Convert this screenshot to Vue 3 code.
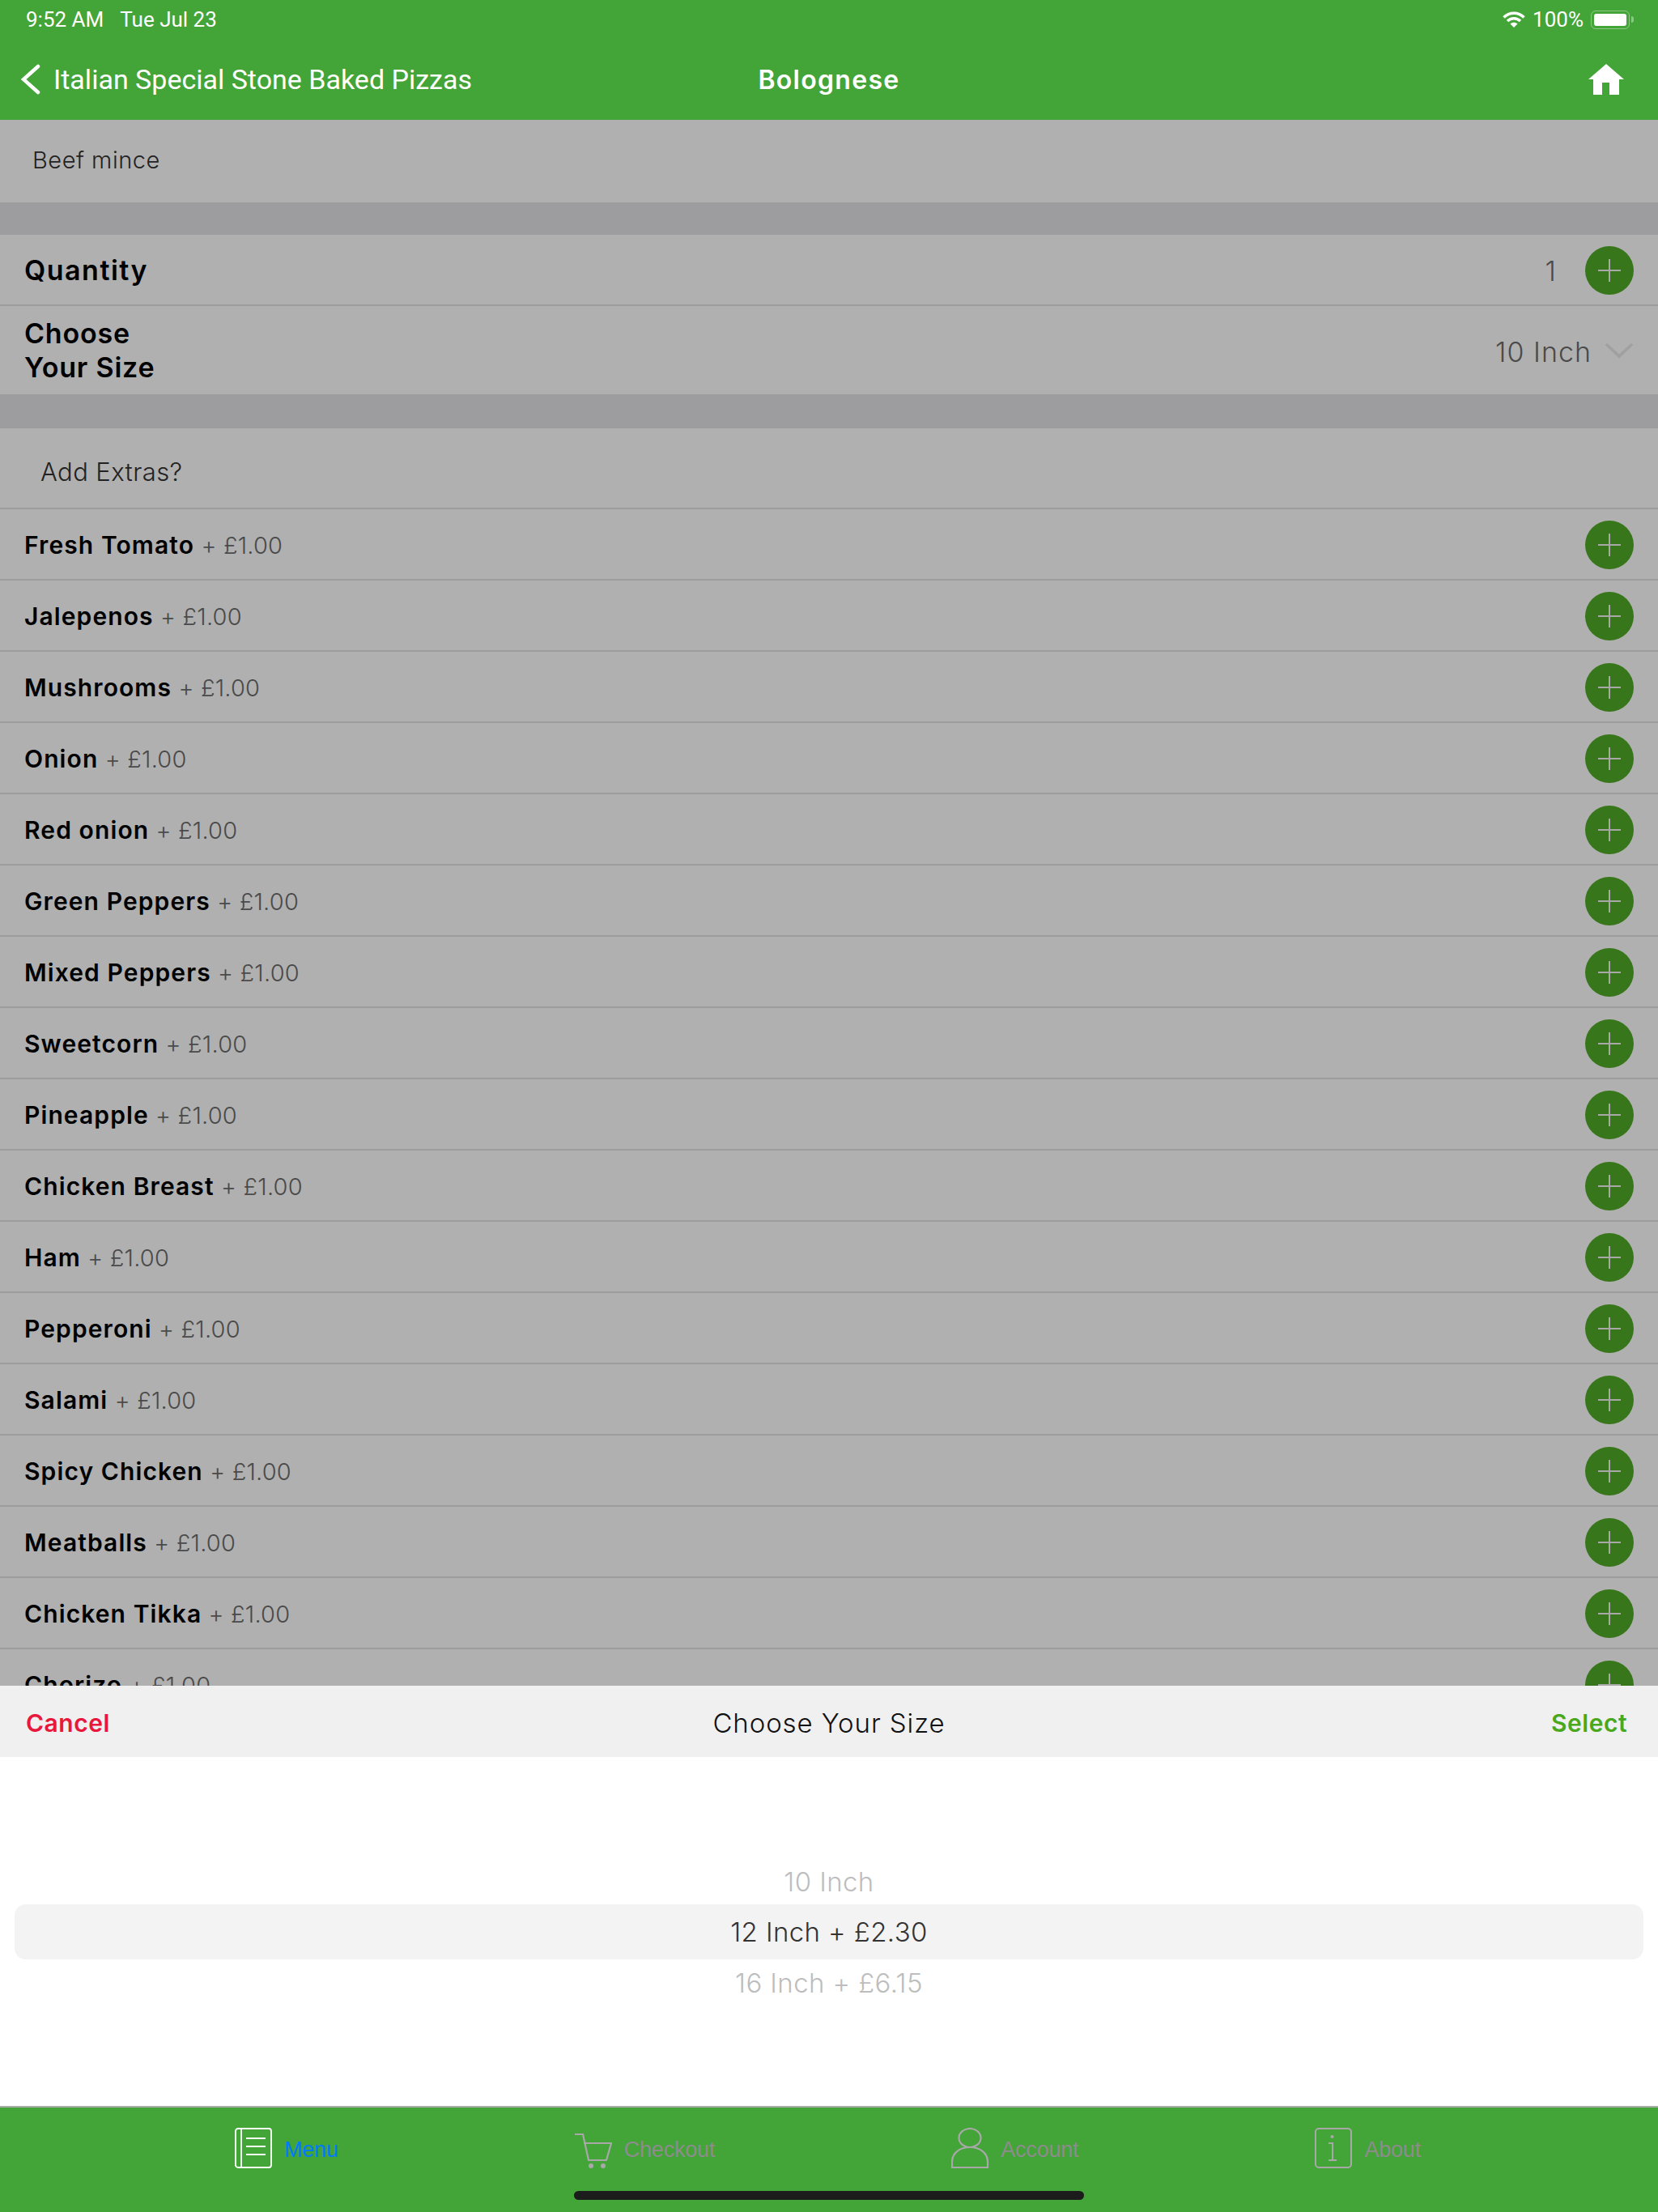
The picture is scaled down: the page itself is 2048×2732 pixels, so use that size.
<template>
  <div class="screen">
    <header class="topbar">
      <div class="status">
        <div class="status-left"><span>9:52 AM</span><span class="date">Tue Jul 23</span></div>
        <div class="status-right">
          <svg width="28" height="20" viewBox="0 0 28 20">
            <path d="M1.5 7.5C8.5 0.5 19.5 0.5 26.5 7.5" class="wifi" />
            <path d="M6 12C10.5 7.5 17.5 7.5 22 12" class="wifi" />
            <path d="M14 20L9.5 15.5C12 13.2 16 13.2 18.5 15.5Z" fill="#fff" />
          </svg>
          <span>100%</span>
          <div class="battery"><div class="battery-fill"></div></div>
          <div class="battery-tip"></div>
        </div>
      </div>
      <div class="nav">
        <div class="back">
          <svg width="24" height="38" viewBox="0 0 24 38">
            <path d="M21 3L3 19L21 35" fill="none" stroke="#fff" stroke-width="4.5" stroke-linecap="round" />
          </svg>
          <span>Italian Special Stone Baked Pizzas</span>
        </div>
        <div class="title">Bolognese</div>
        <svg class="home" width="44" height="38" viewBox="0 0 44 38">
          <path d="M22 0L44 19H38V38H26V23H17V38H6V19H0Z" fill="#fff" />
        </svg>
      </div>
    </header>

    <main class="content">
      <div class="desc">Beef mince</div>
      <div class="gap"></div>
      <div class="row qty-row">
        <span class="name">Quantity</span>
        <div class="row-right">
          <span class="qty">1</span>
          <span class="plus"></span>
        </div>
      </div>
      <div class="size-row">
        <span class="name">Choose<br />Your Size</span>
        <div class="row-right">
          <span class="size-val">10 Inch</span>
          <svg width="36" height="22" viewBox="0 0 36 22">
            <path d="M2 3L18 18L34 3" fill="none" stroke="#a0a0a0" stroke-width="3.5" />
          </svg>
        </div>
      </div>
      <div class="gap gap-2"></div>
      <div class="extras-head">Add Extras?</div>
      <div v-for="item in extras" :key="item" class="row">
        <span><span class="name">{{ item }}</span><span class="price"> + £1.00</span></span>
        <span class="plus"></span>
      </div>
    </main>

    <section class="sheet">
      <div class="sheet-head">
        <span class="cancel">Cancel</span>
        <span class="sheet-title">Choose Your Size</span>
        <span class="select">Select</span>
      </div>
      <div class="picker">
        <div class="opt">10 Inch</div>
        <div class="opt current">12 Inch + £2.30</div>
        <div class="opt">16 Inch + £6.15</div>
      </div>
    </section>

    <footer class="tabs">
      <div class="tab active">
        <svg width="46" height="50" viewBox="0 0 46 50" fill="none" stroke="#fff" stroke-width="1.8">
          <rect x="1" y="1" width="44" height="48" rx="3" />
          <path d="M8 1V49M14 13H38M14 23H38M14 33H38" />
        </svg>
        <span>Menu</span>
      </div>
      <div class="tab">
        <svg width="46" height="50" viewBox="0 0 46 50" fill="none" stroke="#a8a8a8" stroke-width="2.2">
          <path d="M0 8H10L17 40H39L45 19H11" />
          <circle cx="20" cy="47" r="3" fill="#a8a8a8" stroke="none" />
          <circle cx="35" cy="47" r="3" fill="#a8a8a8" stroke="none" />
        </svg>
        <span>Checkout</span>
      </div>
      <div class="tab">
        <svg width="46" height="50" viewBox="0 0 46 50" fill="none" stroke="#a8a8a8" stroke-width="2.2">
          <ellipse cx="23" cy="12.5" rx="13.5" ry="11.5" />
          <path d="M1 49V42C1 31 11 24 23 24S45 31 45 42V49Z" />
        </svg>
        <span>Account</span>
      </div>
      <div class="tab">
        <svg width="46" height="50" viewBox="0 0 46 50" fill="none" stroke="#a8a8a8" stroke-width="2">
          <rect x="1" y="1" width="44" height="48" rx="4" />
          <circle cx="21.5" cy="11" r="2" fill="#a8a8a8" stroke="none" />
          <path d="M17 19H22V40M17 40H27" />
        </svg>
        <span>About</span>
      </div>
      <div class="home-bar"></div>
    </footer>
  </div>
</template>

<script setup>
const extras = [
  'Fresh Tomato',
  'Jalepenos',
  'Mushrooms',
  'Onion',
  'Red onion',
  'Green Peppers',
  'Mixed Peppers',
  'Sweetcorn',
  'Pineapple',
  'Chicken Breast',
  'Ham',
  'Pepperoni',
  'Salami',
  'Spicy Chicken',
  'Meatballs',
  'Chicken Tikka',
  'Chorizo'
]
</script>

<style>
html,
body {
  margin: 0;
  background: #fff;
}
</style>

<style scoped>
.screen {
  width: 2048px;
  height: 2732px;
  display: flex;
  flex-direction: column;
  overflow: hidden;
  font-family: Inter, "Liberation Sans", sans-serif;
}

.topbar {
  height: 148px;
  flex: none;
  background: #43a438;
  color: #fff;
}

.status {
  height: 48px;
  padding: 0 30px 0 32px;
  display: flex;
  justify-content: space-between;
  align-items: center;
  font-family: Roboto, sans-serif;
  font-size: 26px;
}

.date {
  margin-left: 20px;
}

.status-right {
  display: flex;
  align-items: center;
  gap: 9px;
}

.wifi {
  fill: none;
  stroke: #fff;
  stroke-width: 3.5;
}

.battery {
  box-sizing: border-box;
  width: 48px;
  height: 23px;
  padding: 3px;
  border: 1.5px solid rgba(255, 255, 255, 0.4);
  border-radius: 6px;
}

.battery-fill {
  height: 100%;
  background: #fff;
  border-radius: 3px;
}

.battery-tip {
  width: 3px;
  height: 8px;
  margin-left: -7px;
  background: rgba(255, 255, 255, 0.4);
  border-radius: 0 3px 3px 0;
}

.nav {
  height: 100px;
  padding: 0 42px 0 26px;
  display: flex;
  align-items: center;
  justify-content: space-between;
  position: relative;
}

.back {
  display: flex;
  align-items: center;
  gap: 16px;
  font-family: Roboto, sans-serif;
  font-size: 34px;
}

.title {
  position: absolute;
  left: 0;
  right: 0;
  text-align: center;
  font-size: 32px;
  font-weight: 600;
  letter-spacing: 1.3px;
}

.content {
  flex: 1;
  min-height: 0;
  overflow: hidden;
  background: #b0b0b0;
  color: #000;
}

.desc {
  height: 102px;
  padding: 0 0 4px 40px;
  box-sizing: border-box;
  display: flex;
  align-items: center;
  font-size: 29px;
  font-weight: 300;
  letter-spacing: 0.5px;
  color: #222;
}

.gap {
  height: 40px;
  background: #9d9d9f;
}

.gap-2 {
  height: 42px;
}

.row {
  height: 84px;
  padding: 2px 30px 0;
  display: flex;
  align-items: center;
  justify-content: space-between;
  border-bottom: 2px solid #9c9c9c;
}

.size-row {
  height: 109px;
  padding: 0 30px;
  display: flex;
  align-items: center;
  justify-content: space-between;
}

.row-right {
  display: flex;
  align-items: center;
}

.name {
  font-size: 30px;
  font-weight: 600;
  letter-spacing: 1.1px;
  color: #000;
}

.qty-row .name,
.size-row .name {
  font-size: 34px;
  line-height: 42px;
}

.qty-row .name {
  letter-spacing: 1.5px;
}

.size-row .name {
  letter-spacing: 0.8px;
}

.price {
  font-size: 29px;
  font-weight: 300;
  letter-spacing: 0.2px;
  color: #4a4a4a;
}

.qty {
  margin-right: 36px;
  font-size: 34px;
  font-weight: 300;
  color: #4a4a4a;
}

.size-val {
  margin: 3px 16px 0 0;
  font-size: 34px;
  font-weight: 300;
  letter-spacing: 1px;
  color: #4a4a4a;
}

.plus {
  width: 60px;
  height: 60px;
  flex: none;
  border-radius: 50%;
  background: #37761a;
  position: relative;
}

.plus::before,
.plus::after {
  content: "";
  position: absolute;
  background: #a8a8a8;
}

.plus::before {
  left: 16px;
  right: 16px;
  top: 29px;
  height: 2px;
}

.plus::after {
  top: 16px;
  bottom: 16px;
  left: 29px;
  width: 2px;
}

.extras-head {
  height: 90px;
  padding: 8px 0 0 50px;
  display: flex;
  align-items: center;
  border-bottom: 2px solid #9c9c9c;
  font-size: 31px;
  font-weight: 300;
  letter-spacing: 0.4px;
  color: #222;
}

.sheet {
  height: 519px;
  flex: none;
  background: #fff;
}

.sheet-head {
  height: 88px;
  padding: 3px 38px 0 32px;
  box-sizing: border-box;
  display: flex;
  align-items: center;
  justify-content: space-between;
  background: #f0f0f0;
  font-size: 30px;
  position: relative;
}

.cancel {
  font-weight: 600;
  letter-spacing: 0.5px;
  color: #e8173c;
}

.select {
  font-weight: 600;
  letter-spacing: 0.5px;
  color: #4aa81c;
}

.sheet-title {
  position: absolute;
  left: 0;
  right: 0;
  text-align: center;
  font-size: 33px;
  font-weight: 300;
  letter-spacing: 0.9px;
  color: #111;
}

.picker {
  padding: 125px 18px 0;
  display: flex;
  flex-direction: column;
  align-items: stretch;
}

.opt {
  height: 57px;
  display: flex;
  align-items: center;
  justify-content: center;
  font-size: 33px;
  font-weight: 300;
  letter-spacing: 0.4px;
  color: #bdbdbd;
}

.current {
  height: 68px;
  border-radius: 14px;
  background: #f3f3f3;
  color: #333;
}

.tabs {
  height: 131px;
  flex: none;
  box-sizing: border-box;
  padding: 25px 0 0 290px;
  border-top: 2px solid #aaa;
  background: #43a438;
  display: flex;
  gap: 292px;
  align-items: flex-start;
  position: relative;
  font-family: "Liberation Sans", sans-serif;
  font-size: 27px;
  letter-spacing: -0.2px;
  color: #8c8c8c;
}

.tab {
  display: flex;
  align-items: center;
  gap: 15px;
}

.tab span {
  padding-top: 4px;
}

.tab.active {
  color: #007aff;
}

.home-bar {
  position: absolute;
  left: 709px;
  bottom: 15px;
  width: 630px;
  height: 11px;
  border-radius: 6px;
  background: #1c1c1c;
}
</style>
